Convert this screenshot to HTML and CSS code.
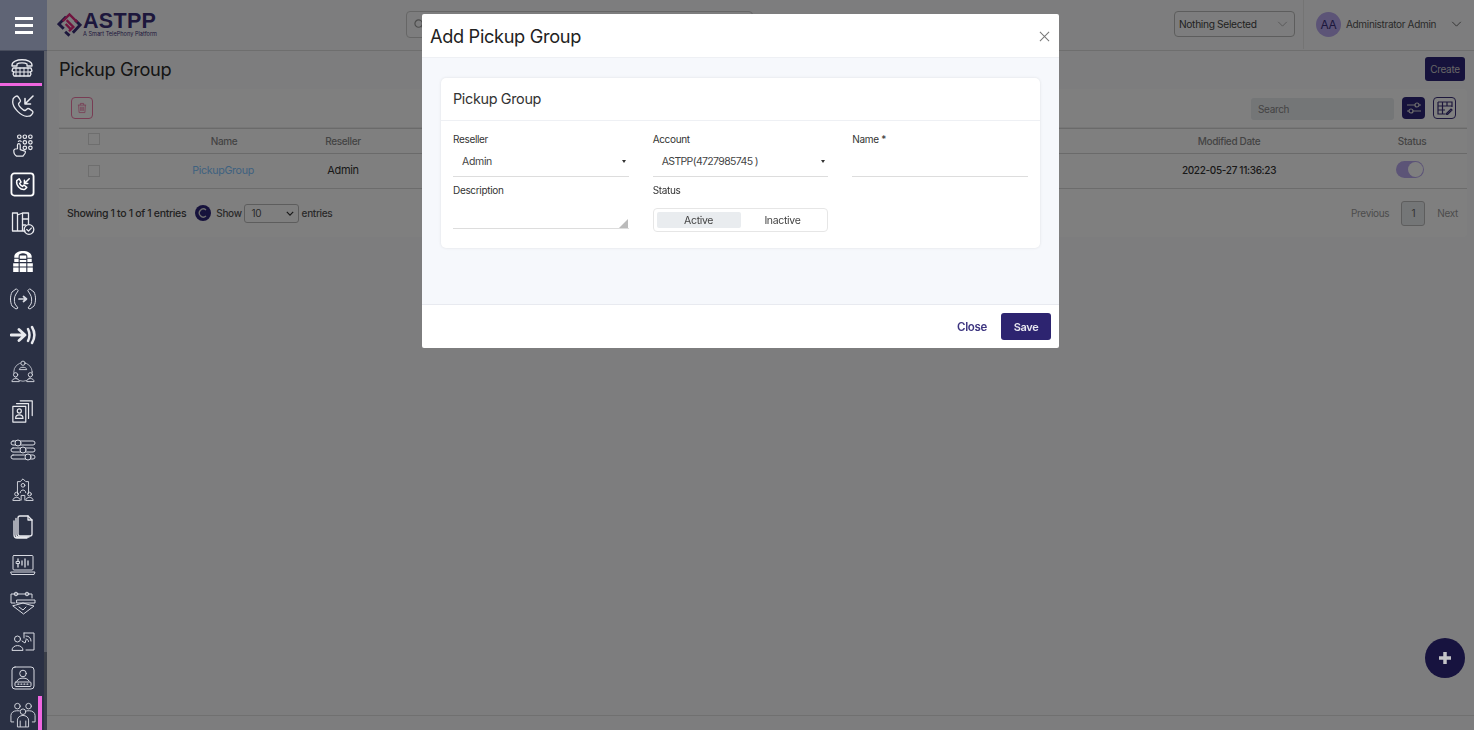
FILE: index.html
```html
<!DOCTYPE html>
<html lang="en">

<head>
    <meta charset="UTF-8">
    <meta name="viewport" content="width=device-width, initial-scale=1.0">
    <title>Pickup Group</title>
    <link rel="stylesheet" href="styles.css">
</head>

<body>
    <div class="app">
        <aside class="sidebar">
            <div class="menu-toggle">
                <span></span><span></span><span></span>
            </div>
            <nav class="side-nav">
                <a class="side-item active-top">
                    <svg class="ico" viewBox="0 0 24 20">
                        <path d="M2 8C2 1 22 1 22 8v1h-5V7C15 5.500 9 5.500 7 7v2H2z" />
                        <path d="M3 11h18l1 3-2 1 1 2-1 2H4l-1-2 1-2-2-1z" />
                        <path d="M6 11v8M10 11v8M14 11v8M18 11v8M3 15h18" stroke-width="1" />
                    </svg>
                </a>
                <a class="side-item">
                    <svg class="ico" viewBox="0 0 24 24">
                        <path d="M2 6c-.5-1.500 2.500-4 4-4 1 0 3.500 4 3.500 5 0 1-2 2-2 3 0 2 4.500 6.500 6.500 6.500 1 0 2-2 3-2s5 2.500 5 3.500c0 1.500-2.500 4.500-4 4C11 24 0 13 2 6z" />
                        <path d="M22 2l-8 8M14 4.500V10h5.500" stroke-width="1.600" />
                    </svg>
                </a>
                <a class="side-item">
                    <svg class="ico" viewBox="0 0 24 26">
                        <circle cx="8" cy="3" r="1.900" />
                        <circle cx="14" cy="3" r="1.900" />
                        <circle cx="20" cy="3" r="1.900" />
                        <circle cx="14" cy="9" r="1.900" />
                        <circle cx="20" cy="9" r="1.900" />
                        <circle cx="14" cy="15" r="1.900" />
                        <circle cx="20" cy="15" r="1.900" />
                        <path d="M7 8a2 2 0 0 1 3 0" />
                        <path d="M6 12a1.500 1.500 0 0 1 3 0v5l5 1.500c2 1-1 4-2 5.500H5c-2-1-3-4-3-6 0-1.500 2-2 4-2z" />
                    </svg>
                </a>
                <a class="side-item">
                    <svg class="ico ico-box" viewBox="0 0 26 26">
                        <rect x="1.500" y="1.500" width="23" height="23" rx="3" stroke-width="1.900" />
                        <path d="M7 9l2.500-2 2 3.500-1.500 1.500c.8 1.500 1.800 2.500 3 3l1.500-1.500 3 2.500-2 2C11 19 6 14 7 9z" stroke-width="1.500" />
                        <path d="M20 7l-5 5M15 8.500V12h3.500" stroke-width="1.600" />
                    </svg>
                </a>
                <a class="side-item">
                    <svg class="ico" viewBox="0 0 24 24">
                        <path d="M1.500 2h5v18h-5zM6.500 4l5-2v18H6.500M11.500 2h6v11M11.500 20H14" />
                        <path d="M11.500 8h6M11.500 14h3" />
                        <circle cx="18" cy="18.500" r="4.800" />
                        <path d="M15.800 18.500l1.700 1.600 2.800-3" />
                    </svg>
                </a>
                <a class="side-item">
                    <svg class="ico ico-solid" viewBox="0 0 22 22">
                        <path d="M3 8V7C3 0 19 0 19 7v1h-4V6.500C15 3 7 3 7 6.500V8z" />
                        <path d="M8 6h6v3H8zM3 9h4v3H3zM8 10h6v2H8zM15 9h4v3h-4zM2 13h5v3H2zM8 13h6v3H8zM15 13h5v3h-5zM2 17h5v4H2zM8 17h6v4H8zM15 17h5v4h-5z" />
                    </svg>
                </a>
                <a class="side-item">
                    <svg class="ico ico-wide ico-thin" viewBox="0 0 26 22">
                        <path d="M6 1L2 4C0 8 0 14 2 18l4 3 2-1-3-4c-1-3-1-7 1-10l2-3z" />
                        <path d="M20 1l4 3c2 4 2 10 0 14l-4 3-2-1 3-4c1-3 1-7-1-10l-2-3z" />
                        <path d="M9 11h7M13.500 8.500L16.500 11l-3 2.500" stroke-width="1.700" />
                    </svg>
                </a>
                <a class="side-item">
                    <svg class="ico ico-wide" viewBox="0 0 26 18">
                        <path d="M1 9h13M9 3.500L15 9l-6 5.500" stroke-width="2.800" />
                        <path d="M18 3c2 4 2 8 0 12M22 1c3 5 3 11 0 16" stroke-width="2.500" />
                    </svg>
                </a>
                <a class="side-item">
                    <svg class="ico ico-wide ico-thin" viewBox="0 0 26 26">
                        <circle cx="13" cy="13" r="10" stroke-width=".8" />
                        <g class="knob">
                            <circle cx="13" cy="3.500" r="2.300" />
                            <path d="M9 10c0-3 8-3 8 0z" />
                            <circle cx="5" cy="16" r="2.300" />
                            <path d="M1 23c0-4 8-4 8 0z" />
                            <circle cx="21" cy="16" r="2.300" />
                            <path d="M17 23c0-4 8-4 8 0z" />
                        </g>
                    </svg>
                </a>
                <a class="side-item">
                    <svg class="ico" viewBox="0 0 24 26">
                        <rect x="1" y="8" width="14" height="17" />
                        <path d="M5 5h13v16M9 2h13v16" />
                        <circle cx="8" cy="13" r="2.200" />
                        <path d="M4 21c0-5 8-5 8 0z" />
                    </svg>
                </a>
                <a class="side-item">
                    <svg class="ico ico-wide ico-thin" viewBox="0 0 26 22">
                        <rect x="1" y="2" width="24" height="4" rx="2" />
                        <rect x="1" y="9" width="24" height="4" rx="2" />
                        <rect x="1" y="16" width="24" height="4" rx="2" />
                        <circle class="knob" cx="8" cy="4" r="3" />
                        <circle class="knob" cx="13" cy="11" r="3" />
                        <circle class="knob" cx="18" cy="18" r="3" />
                    </svg>
                </a>
                <a class="side-item">
                    <svg class="ico ico-thin" viewBox="0 0 24 26">
                        <path d="M6 18V5h3l3-3 3 3h3v13" />
                        <circle cx="12" cy="9" r="2" />
                        <path d="M9 17c0-4 6-4 6 0" />
                        <circle cx="5" cy="18.500" r="2" />
                        <path d="M1 25c0-4 8-4 8 0z" />
                        <circle cx="19" cy="18.500" r="2" />
                        <path d="M15 25c0-4 8-4 8 0zM10 25v-5h4v5" />
                    </svg>
                </a>
                <a class="side-item">
                    <svg class="ico" viewBox="0 0 20 24">
                        <path d="M7 1h8l4 4v14a2 2 0 0 1-2 2H7a2 2 0 0 1-2-2V3a2 2 0 0 1 2-2z" />
                        <path d="M15 1v4h4" />
                        <path d="M3 3.500v16a2.500 2.500 0 0 0 2.500 2.500H16M1 6v14a3 3 0 0 0 3 3h10" />
                    </svg>
                </a>
                <a class="side-item">
                    <svg class="ico ico-wide ico-thin" viewBox="0 0 26 22">
                        <rect x="3" y="1.500" width="20" height="14.500" rx="1" />
                        <path d="M1 18h24l-1 2.500H2z" />
                        <path d="M8 5v8M12 7v4M15 5v8M18 7v4" stroke-width="1.300" />
                        <rect class="knob" x="6.500" y="7.500" width="3" height="2" />
                    </svg>
                </a>
                <a class="side-item">
                    <svg class="ico ico-wide ico-thin" viewBox="0 0 26 24">
                        <path d="M5 12H1V3h21v4" />
                        <circle cx="6" cy="3" r="1.800" />
                        <circle cx="17" cy="3" r="1.800" />
                        <path d="M7 9h18v3H7z" />
                        <path d="M6 14l7-2 7 2 4 1-10.500 8L3 15z" />
                        <path d="M9 16l4 3 3-3" />
                    </svg>
                </a>
                <a class="side-item">
                    <svg class="ico ico-thin" viewBox="0 0 24 20">
                        <circle cx="6.500" cy="8" r="3" />
                        <path d="M1 19c0-6 11-6 11 0z" />
                        <path d="M13 2h10v17h-8M13 2v5" />
                        <path d="M15 5c3 0 5 2 5 5M15 8c1.500 0 2.500 1 2.500 2.500" stroke-width="1" />
                        <path d="M11 10l3 2 1-3" />
                    </svg>
                </a>
                <a class="side-item">
                    <svg class="ico ico-thin" viewBox="0 0 24 24">
                        <rect x="1" y="1" width="22" height="22" rx="3" />
                        <circle cx="12" cy="7.500" r="3.300" />
                        <path d="M6 15c1-4 11-4 12 0" />
                        <rect x="4" y="16" width="16" height="4.500" rx="1" />
                        <path d="M7 18.200h.8M10 18.200h.8M13 18.200h.8M16 18.200h.8" stroke-width="1.300" />
                    </svg>
                </a>
                <a class="side-item active-side">
                    <svg class="ico ico-wide ico-tall ico-thin" viewBox="0 0 28 28">
                        <circle cx="8" cy="5" r="3" />
                        <circle cx="20" cy="5" r="3" />
                        <circle cx="14" cy="11" r="3" />
                        <path d="M4 22H1v-7c0-3 3-5 6-5h3M24 22h3v-7c0-3-3-5-6-5h-3" />
                        <path d="M8 27v-7c0-3 3-5 6-5s6 2 6 5v7zM11 27v-6M17 27v-6" />
                    </svg>
                </a>
            </nav>
        </aside>

        <div class="main">
            <header class="topbar">
                <div class="logo">
                    <svg class="logo-mark" viewBox="0 0 26 26">
                        <path class="mark-dark" d="M9.500 5L2 12.500l5 5M16.500 21.500L24 13.500l-5-5M8.500 20.500L13 24.500" />
                        <path class="mark-pink" d="M6 9.500L13 2.500l8 8M10 8.500l7 7-4.500 4.500M9 12.500l5 5" />
                    </svg>
                    <div class="logo-text">
                        <span class="logo-name">ASTPP</span>
                        <span class="logo-sub">A Smart TelePhony Platform</span>
                    </div>
                </div>
                <div class="top-search">
                    <svg viewBox="0 0 12 12"><circle cx="5" cy="5" r="4" /><path d="M8 8l3 3" /></svg>
                </div>
                <div class="top-select">
                    <span>Nothing Selected</span>
                    <svg class="chev" viewBox="0 0 12 7"><path d="M1 1l5 5 5-5" /></svg>
                </div>
                <div class="user">
                    <span class="avatar">AA</span>
                    <span class="user-name">Administrator Admin</span>
                    <svg class="chev chev-dark" viewBox="0 0 12 7"><path d="M1 1l5 5 5-5" /></svg>
                </div>
            </header>

            <div class="page">
                <div class="page-head">
                    <h1>Pickup Group</h1>
                    <button class="btn-create">Create</button>
                </div>

                <section class="list-card">
                    <div class="toolbar">
                        <button class="btn-trash">
                            <svg viewBox="0 0 12 13"><path d="M1 3h10M4 3V1h4v2M2 3l.5 9h7l.5-9M4.500 5v5M6 5v5M7.500 5v5" /></svg>
                        </button>
                        <div class="toolbar-right">
                            <div class="search">Search</div>
                            <button class="btn-icon filled">
                                <svg viewBox="0 0 16 14"><path d="M1 4h8M13 4h2M1 10h2M7 10h8" /><circle cx="11" cy="4" r="2" /><circle cx="5" cy="10" r="2" /></svg>
                            </button>
                            <button class="btn-icon outline">
                                <svg viewBox="0 0 16 14"><path d="M1 1h14v5M1 1v12h7M1 5h14M1 9h7M5.500 1v12M10 1v4" /><path d="M9 13l5-5 1 1-5 5z" /></svg>
                            </button>
                        </div>
                    </div>

                    <table class="grid">
                        <colgroup>
                            <col class="c-check">
                            <col class="c-name">
                            <col class="c-reseller">
                            <col>
                            <col class="c-date">
                            <col class="c-status">
                        </colgroup>
                        <thead>
                            <tr>
                                <th><span class="check check-head"></span></th>
                                <th>Name</th>
                                <th>Reseller</th>
                                <th></th>
                                <th>Modified Date</th>
                                <th>Status</th>
                            </tr>
                        </thead>
                        <tbody>
                            <tr>
                                <td><span class="check"></span></td>
                                <td><a class="link">PickupGroup</a></td>
                                <td>Admin</td>
                                <td></td>
                                <td class="date">2022-05-27 11:36:23</td>
                                <td><span class="switch"></span></td>
                            </tr>
                        </tbody>
                    </table>

                    <div class="list-foot">
                        <span class="showing">Showing 1 to 1 of 1 entries</span>
                        <span class="refresh">
                            <svg viewBox="0 0 16 16"><path d="M11 5a4 4 0 1 0 0 6" /></svg>
                        </span>
                        <span class="show-label">Show</span>
                        <div class="page-size">
                            <span>10</span>
                            <svg viewBox="0 0 10 6"><path d="M1 1l4 4 4-4" /></svg>
                        </div>
                        <span class="show-label">entries</span>
                        <div class="pager">
                            <span>Previous</span>
                            <span class="page-num">1</span>
                            <span>Next</span>
                        </div>
                    </div>
                </section>
            </div>

            <footer class="page-foot"></footer>
        </div>
    </div>

    <div class="backdrop">
        <div class="modal">
            <div class="modal-head">
                <h2>Add Pickup Group</h2>
                <svg class="modal-close" viewBox="0 0 12 12"><path d="M1 1l10 10M11 1L1 11" /></svg>
            </div>
            <div class="modal-body">
                <div class="form-card">
                    <div class="form-title">Pickup Group</div>
                    <div class="form-grid">
                        <div class="field">
                            <label>Reseller</label>
                            <div class="select"><span>Admin</span><i class="caret"></i></div>
                        </div>
                        <div class="field">
                            <label>Account</label>
                            <div class="select"><span class="account">ASTPP(4727985745 )</span><i class="caret"></i></div>
                        </div>
                        <div class="field">
                            <label>Name *</label>
                            <div class="select"></div>
                        </div>
                        <div class="field">
                            <label>Description</label>
                            <div class="textarea">
                                <svg class="grip" viewBox="0 0 9 9"><path d="M9 0v9H0z" /></svg>
                            </div>
                        </div>
                        <div class="field">
                            <label>Status</label>
                            <div class="segmented">
                                <span class="seg on">Active</span>
                                <span class="seg">Inactive</span>
                            </div>
                        </div>
                    </div>
                </div>
            </div>
            <div class="modal-foot">
                <a class="btn-close">Close</a>
                <button class="btn-save">Save</button>
            </div>
        </div>
    </div>

    <button class="fab">
        <svg viewBox="0 0 14 14"><path d="M7 1v12M1 7h12" /></svg>
    </button>
</body>

</html>
```

FILE: styles.css
```css
* {
    box-sizing: border-box;
}

html,
body {
    margin: 0;
    height: 100%;
    overflow: hidden;
}

body {
    font-family: Inter, "Noto Sans", sans-serif;
    font-size: 11px;
    letter-spacing: -.03em;
    color: #444;
    background-color: #fafbfc;
}

button {
    font-family: inherit;
    letter-spacing: inherit;
    border: none;
    padding: 0;
}

.app {
    display: flex;
    height: 730px;
}

/* sidebar sits above the backdrop */
.sidebar {
    position: relative;
    z-index: 20;
    flex: 0 0 47px;
    width: 47px;
    height: 730px;
    background-color: #2a3044;
    border-right: 3px solid #3a3e48;
}

/* scrollbar thumb */
.sidebar::after {
    content: "";
    position: absolute;
    top: 51px;
    right: -3px;
    width: 3px;
    height: 601px;
    background: #5b5e67;
}

.menu-toggle {
    height: 51px;
    margin-right: -3px;
    background-color: #5f6475;
    border-bottom: 1px solid #474c5c;
    display: flex;
    flex-direction: column;
    justify-content: center;
    align-items: center;
    gap: 4px;
}

.menu-toggle span {
    width: 18px;
    height: 3px;
    background: white;
}

.side-nav {
    display: grid;
    grid-template-rows: 35px 40px 39px 39px 38px 38px 37px 36px 38px 39px 39px 39px 38px 38px 38px 38px 36px 36px;
    height: 679px;
}

.side-item {
    display: flex;
    align-items: center;
    justify-content: center;
    position: relative;
    padding-left: 1px;
}

.active-top {
    border-bottom: 3px solid #f066e0;
    padding-bottom: 1px;
    margin-right: 2px;
}

.active-side::after {
    content: "";
    position: absolute;
    top: 0;
    bottom: 0;
    right: 2px;
    width: 4px;
    background: #f066e0;
}

.ico {
    width: 24px;
    height: 24px;
    fill: none;
    stroke: #e8e9ee;
    stroke-width: 1.300;
    stroke-linejoin: round;
    stroke-linecap: round;
}

.ico-wide {
    width: 26px;
}

.ico-tall {
    height: 27px;
}

.ico-thin {
    stroke-width: 1;
    stroke: #d8dae2;
}

.ico-box {
    width: 25px;
    height: 25px;
    stroke: #fff;
}

.ico-solid {
    fill: #fff;
    stroke: none;
}

.knob {
    fill: #2a3044;
}

/* top bar */
.main {
    flex: 1;
    display: flex;
    flex-direction: column;
    min-width: 0;
}

.topbar {
    height: 51px;
    flex: none;
    display: flex;
    align-items: center;
    padding: 0 0 2px 10px;
    border-bottom: 1px solid #ddd;
    background-color: #fafbfc;
}

.logo {
    display: flex;
    align-items: center;
    gap: 1px;
    width: 349px;
}

.logo-mark {
    width: 25px;
    height: 25px;
    fill: none;
}

.mark-dark {
    stroke: #3a2f78;
    stroke-width: 3;
}

.mark-pink {
    stroke: #e0287c;
    stroke-width: 2.500;
}

.logo-text {
    display: flex;
    flex-direction: column;
    color: #3a2f78;
    padding-top: 2px;
}

.logo-name {
    font-family: "Liberation Sans", sans-serif;
    font-weight: 700;
    font-size: 21.500px;
    line-height: 19px;
    letter-spacing: .3px;
}

.logo-sub {
    font-size: 5.600px;
    line-height: 7px;
    letter-spacing: 0;
}

.top-search {
    width: 347px;
    height: 27px;
    border: 1px solid #ccc;
    border-radius: 4px;
    padding-left: 7px;
    display: flex;
    align-items: center;
}

.top-search svg {
    width: 11px;
    height: 11px;
    fill: none;
    stroke: #999;
    stroke-width: 1.300;
}

.top-select {
    margin-left: auto;
    width: 121px;
    height: 26px;
    border: 1px solid #bbb;
    border-radius: 4px;
    padding: 0 6px 0 4px;
    display: flex;
    align-items: center;
    justify-content: space-between;
    color: #444;
    font-size: 10.200px;
}

.chev {
    width: 11px;
    height: 6px;
    fill: none;
    stroke: #aaa;
    stroke-width: 1;
}

.chev-dark {
    stroke: #555;
    margin-left: auto;
    margin-right: 12px;
}

.user {
    width: 171px;
    height: 50px;
    margin-left: 8px;
    border-left: 1px solid #e8e8e8;
    padding-left: 12px;
    display: flex;
    align-items: center;
    color: #555;
    font-size: 10px;
}

.avatar {
    width: 25px;
    height: 25px;
    border-radius: 50%;
    background-color: #b9a8ee;
    color: #3a2f78;
    font-size: 12px;
    display: flex;
    align-items: center;
    justify-content: center;
    margin-right: 5px;
}

/* page content */
.page {
    flex: 1;
    padding: 0 7px 0 12px;
}

.page-head {
    height: 38px;
    padding-bottom: 2px;
    display: flex;
    align-items: center;
    justify-content: space-between;
}

.page-head h1 {
    margin: 0;
    font-size: 18.200px;
    font-weight: 400;
    color: #2a2a2a;
}

.btn-create {
    width: 40px;
    height: 24px;
    margin-right: 2px;
    border-radius: 3px;
    background-color: #2d2478;
    color: #ccc;
    font-size: 10px;
}

.list-card {
    background: white;
    border-radius: 4px;
}

.toolbar {
    height: 39px;
    display: flex;
    align-items: center;
    justify-content: space-between;
    padding: 0 11px 0 12px;
    border-bottom: 1px solid #eee;
}

.btn-trash {
    width: 22px;
    height: 22px;
    background: none;
    border: 1px solid #f07aa8;
    border-radius: 4px;
    display: flex;
    align-items: center;
    justify-content: center;
}

.btn-trash svg {
    width: 10px;
    height: 12px;
    fill: none;
    stroke: #f07aa8;
}

.toolbar-right {
    display: flex;
    align-items: center;
    gap: 8px;
}

.search {
    width: 143px;
    height: 22px;
    margin-top: 2px;
    background-color: #e9ecef;
    border-radius: 3px;
    padding-left: 7px;
    line-height: 22px;
    color: #888;
    font-size: 10px;
}

.btn-icon {
    width: 23px;
    height: 22px;
    border-radius: 4px;
    display: flex;
    align-items: center;
    justify-content: center;
}

.btn-icon svg {
    width: 16px;
    height: 14px;
    fill: none;
    stroke-width: 1.200;
}

.filled {
    background-color: #2d2478;
}

.filled svg {
    stroke: #ddd;
}

.outline {
    background: none;
    border: 1px solid #3a2f78;
}

.outline svg {
    stroke: #3a2f78;
}

.grid {
    width: 100%;
    border-collapse: collapse;
    table-layout: fixed;
}

.c-check {
    width: 70px;
}

.c-name {
    width: 190px;
}

.c-reseller {
    width: 48px;
}

.c-date {
    width: 256px;
}

.c-status {
    width: 110px;
}

.grid th,
.grid td {
    text-align: center;
    padding: 0;
    white-space: nowrap;
}

.grid th {
    height: 25px;
    border-top: 1px solid #d4d4d4;
    border-bottom: 1px solid #d4d4d4;
    font-weight: 500;
    font-size: 10px;
    color: #888;
}

.grid td {
    height: 35px;
    padding-bottom: 2px;
    border-bottom: 1px solid #d8d8d8;
    font-size: 11px;
    color: #333;
}

.grid .date {
    font-size: 10px;
    font-weight: 500;
}

.check {
    display: inline-block;
    width: 12px;
    height: 12px;
    border: 1px solid #ddd;
    vertical-align: middle;
}

.check-head {
    margin-bottom: 5px;
}

.link {
    display: inline-block;
    margin-right: 2px;
    color: #7fc4ff;
    font-size: 10.700px;
}

.switch {
    display: inline-block;
    width: 28px;
    height: 17px;
    margin: 0 4px 2px 0;
    border-radius: 9px;
    background-color: #b9a8ee;
    position: relative;
    vertical-align: middle;
}

.switch::after {
    content: "";
    position: absolute;
    right: 1px;
    top: 1px;
    width: 15px;
    height: 15px;
    border-radius: 50%;
    background: white;
}

.list-foot {
    height: 48px;
    display: flex;
    align-items: center;
    padding: 0 9px 0 8px;
    color: #444;
    font-size: 10.500px;
    font-weight: 500;
}

.refresh {
    width: 16px;
    height: 16px;
    margin: 0 5px 0 9px;
    border-radius: 50%;
    background-color: #2d2478;
}

.refresh svg {
    display: block;
    width: 16px;
    height: 16px;
    fill: none;
    stroke: #ddd;
    stroke-width: 1.300;
}

.show-label {
    font-size: 10px;
    color: #555;
}

.page-size {
    width: 55px;
    height: 19px;
    margin: 0 3px 0 2px;
    border: 1px solid #bbb;
    border-radius: 3px;
    padding: 0 4px 0 7px;
    display: flex;
    align-items: center;
    justify-content: space-between;
    font-weight: 400;
    font-size: 10px;
    color: #555;
}

.page-size svg {
    width: 8px;
    height: 5px;
    fill: none;
    stroke: #333;
    stroke-width: 1.500;
}

.pager {
    margin-left: auto;
    display: flex;
    align-items: center;
    gap: 12px;
    color: #999;
    font-size: 10px;
    font-weight: 400;
}

.page-num {
    width: 24px;
    height: 25px;
    border: 1px solid #bbb;
    border-radius: 3px;
    background-color: #e9ecef;
    color: #666;
    text-align: center;
    line-height: 23px;
}

.page-foot {
    height: 15px;
    flex: none;
    border-top: 1px solid #e0e0e0;
}

/* modal */
.backdrop {
    position: fixed;
    inset: 0;
    z-index: 10;
    background-color: rgba(0, 0, 0, .5);
    display: flex;
    justify-content: center;
    align-items: flex-start;
    padding: 14px 0 0 7px;
}

.modal {
    width: 637px;
    height: 334px;
    background: white;
    border-radius: 2px;
    display: flex;
    flex-direction: column;
}

.modal-head {
    height: 44px;
    flex: none;
    display: flex;
    align-items: center;
    justify-content: space-between;
    padding: 0 9px 0 8px;
    border-bottom: 1px solid #eef0f4;
}

.modal-head h2 {
    margin: 0;
    font-size: 18.200px;
    font-weight: 400;
    color: #222;
}

.modal-close {
    width: 11px;
    height: 11px;
    margin-top: 1px;
    fill: none;
    stroke: #777;
    stroke-width: 1.100;
}

.modal-body {
    flex: 1;
    background-color: #f6f8fc;
    padding: 20px 19px 0;
}

.form-card {
    height: 170px;
    background: white;
    border-radius: 5px;
    box-shadow: 0 0 3px rgba(0, 0, 0, .1);
}

.form-title {
    height: 43px;
    padding-left: 12px;
    line-height: 41px;
    font-size: 14.400px;
    color: #333;
    border-bottom: 1px solid #eef0f4;
}

.form-grid {
    display: grid;
    grid-template-columns: repeat(3, 1fr);
    column-gap: 24px;
    padding: 12px 12px 0;
}

.field label {
    display: block;
    height: 15px;
    line-height: 13px;
    font-size: 10px;
    color: #333;
}

.select {
    height: 29px;
    margin-bottom: 7px;
    border-bottom: 1px solid #ddd;
    padding: 0 3px 2px 9px;
    display: flex;
    align-items: center;
    justify-content: space-between;
    font-size: 10.500px;
    color: #444;
}

.account {
    letter-spacing: -.06em;
}

.caret {
    width: 0;
    height: 0;
    border-left: 2.500px solid transparent;
    border-right: 2.500px solid transparent;
    border-top: 3px solid #333;
}

.textarea {
    height: 29px;
    margin-top: 1px;
    border-bottom: 1px solid #ddd;
    display: flex;
    align-items: flex-end;
    justify-content: flex-end;
}

.grip {
    width: 9px;
    height: 9px;
    fill: #bbb;
    display: block;
    margin: 0 1px 0 0;
}

.segmented {
    height: 24px;
    margin-top: 9px;
    padding: 3px;
    border: 1px solid #e6e6e6;
    border-radius: 4px;
    display: flex;
}

.seg {
    flex: 1;
    display: flex;
    align-items: center;
    justify-content: center;
    border-radius: 2px;
    font-size: 10.500px;
    color: #444;
}

.seg.on {
    background-color: #e9ecef;
}

.modal-foot {
    height: 44px;
    flex: none;
    display: flex;
    align-items: center;
    justify-content: flex-end;
    padding-right: 8px;
    border-top: 1px solid #e8eaf0;
}

.btn-close {
    color: #3d3580;
    font-size: 11.500px;
    font-weight: 600;
    margin-right: 14px;
}

.btn-save {
    width: 50px;
    height: 27px;
    border-radius: 3px;
    background-color: #2d2470;
    color: #e8e8f0;
    font-size: 11px;
    font-weight: 600;
}

.fab {
    position: fixed;
    z-index: 30;
    right: 9px;
    bottom: 52px;
    width: 40px;
    height: 40px;
    border-radius: 50%;
    background-color: #17133f;
    display: flex;
    align-items: center;
    justify-content: center;
}

.fab svg {
    width: 14px;
    height: 14px;
    fill: none;
    stroke: #c4c4c8;
    stroke-width: 3.500;
}
```
